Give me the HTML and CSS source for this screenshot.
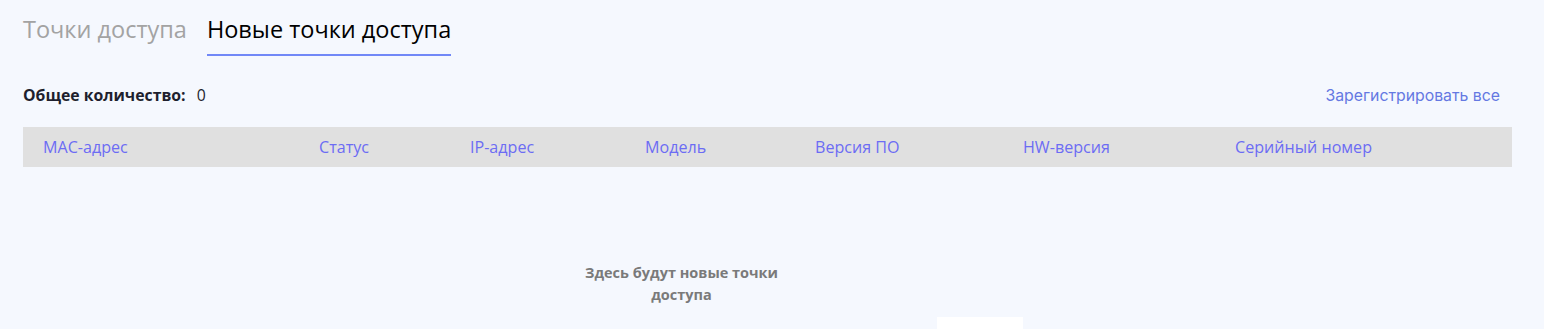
FILE: index.html
```html
<!DOCTYPE html>
<html lang="ru">
<head>
    <meta charset="UTF-8">
    <meta name="viewport" content="width=device-width, initial-scale=1.0">
    <title>Новые точки доступа</title>
    <link rel="stylesheet" href="styles.css">
</head>
<body>
    <main class="page">
        <nav class="tabs">
            <a href="#" class="tab">Точки доступа</a>
            <a href="#" class="tab active">Новые точки доступа</a>
        </nav>

        <div class="summary">
            <div class="total">
                <span class="total-label">Общее количество:</span>
                <span class="total-value">0</span>
            </div>
            <a href="#" class="register-all">Зарегистрировать все</a>
        </div>

        <div class="table-head">
            <div class="col col-mac">MAC-адрес</div>
            <div class="col col-status">Статус</div>
            <div class="col col-ip">IP-адрес</div>
            <div class="col col-model">Модель</div>
            <div class="col col-fw">Версия ПО</div>
            <div class="col col-hw">HW-версия</div>
            <div class="col col-serial">Серийный номер</div>
        </div>

        <div class="empty">
            <p class="empty-text">Здесь будут новые точки доступа</p>
        </div>
        <div class="empty-bottom">
            <div class="empty-box"></div>
        </div>
    </main>
</body>
</html>
```

FILE: styles.css
```css
body {
    margin: 0;
    background-color: #f5f8fe;
    font-family: "Open Sans", "Noto Sans", sans-serif;
    overflow: hidden;
}
.page {
    padding: 0 32px 0 23px;
}
.tabs {
    display: flex;
    gap: 20px;
    padding-top: 13px;
}
.tab {
    font-size: 23.5px;
    line-height: 32px;
    color: #a3a3a3;
    text-decoration: none;
    padding-bottom: 9px;
    border-bottom: 2px solid transparent;
}
.tab.active {
    color: #000;
    border-bottom-color: #7188f7;
}
.summary {
    display: flex;
    justify-content: space-between;
    align-items: center;
    margin-top: 29px;
    height: 20px;
}
.total {
    display: flex;
    gap: 11px;
    font-size: 15.8px;
    color: #1e1f2e;
}
.total-label {
    font-weight: 700;
}
.register-all {
    font-family: Inter, sans-serif;
    font-size: 15.8px;
    color: #6478e2;
    text-decoration: none;
    margin-right: 12px;
}
.table-head {
    display: flex;
    align-items: center;
    height: 40px;
    margin-top: 22px;
    background-color: #e0e0e0;
    font-size: 16.1px;
    color: #6c6cf4;
}
.col-mac { padding-left: 20px; width: 276px; }
.col-status { width: 151px; }
.col-ip { width: 175px; }
.col-model { width: 170px; }
.col-fw { width: 208px; }
.col-hw { width: 212px; }
.empty {
    display: flex;
    justify-content: center;
    padding-top: 95px;
    padding-right: 172px;
}
.empty-text {
    margin: 0;
    width: 215px;
    text-align: center;
    font-size: 14.5px;
    line-height: 22px;
    font-weight: 700;
    color: #7a7a7a;
}
.empty-bottom {
    display: flex;
    padding-left: 914px;
    margin-top: 11px;
}
.empty-box {
    width: 86px;
    height: 20px;
    background-color: #fff;
}
```
